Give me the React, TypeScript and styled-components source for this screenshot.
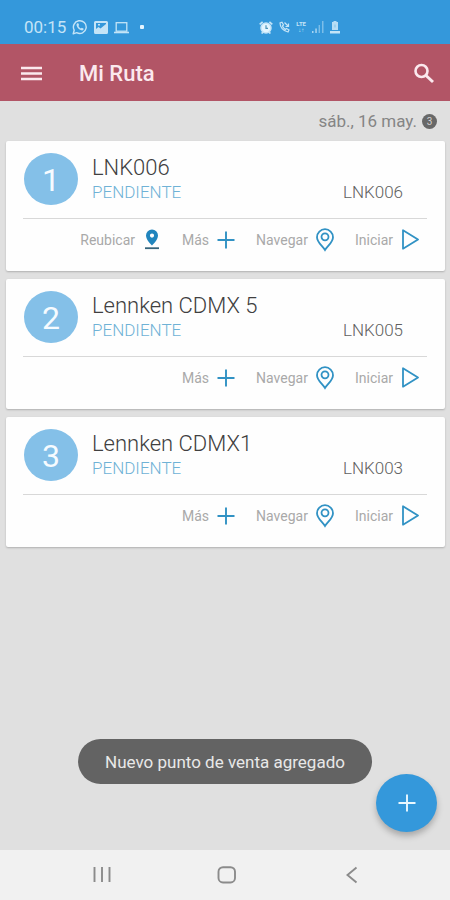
import React from "react";
import styled, { createGlobalStyle } from "styled-components";

const GlobalStyle = createGlobalStyle`
  *, *::before, *::after { box-sizing: border-box; }
  body { margin: 0; background: #e0e0e0; font-family: Roboto, "Noto Sans", sans-serif; }
  button { margin: 0; padding: 0; border: 0; background: none; font: inherit; color: inherit; cursor: pointer; }
  svg { display: block; flex: none; }
  h1, h2, p, ul { margin: 0; padding: 0; font-weight: 400; }
`;

const Screen = styled.div`
  display: flex;
  flex-direction: column;
  min-height: 100vh;
  background: #e0e0e0;
`;

const StatusBar = styled.div`
  display: flex;
  justify-content: space-between;
  align-items: center;
  height: 44px;
  padding: 10px 110px 0 24px;
  background: #3498db;
  color: #c4e4f7;
`;

const StatusGroup = styled.div`
  display: flex;
  align-items: center;
  gap: 6px;
`;

const Clock = styled.span`
  font-size: 17px;
  line-height: 20px;
`;

const NetworkLabel = styled.span`
  display: flex;
  flex-direction: column;
  align-items: center;
  font-size: 6px;
  line-height: 6px;
  font-weight: 700;
`;

const AppBar = styled.header`
  display: flex;
  align-items: center;
  height: 57px;
  padding: 2px 15px 0 19px;
  background: #b25566;
  color: #fbe9ee;
`;

const AppTitle = styled.h1`
  flex: 1;
  padding-left: 36px;
  font-size: 22px;
  line-height: 28px;
  && { font-weight: 500; }
`;

const Main = styled.main`
  position: relative;
  flex: 1;
  padding: 0 5px 24px 6px;
`;

const DateRow = styled.div`
  display: flex;
  justify-content: flex-end;
  align-items: center;
  gap: 5px;
  height: 40px;
  padding-right: 8px;
  color: #858585;
  font-size: 17px;
  line-height: 20px;
`;

const CountBadge = styled.span`
  width: 15px;
  height: 15px;
  border-radius: 50%;
  background: #686868;
  color: #d2d2d2;
  font-size: 10px;
  line-height: 15px;
  text-align: center;
`;

const StopList = styled.ul`
  display: flex;
  flex-direction: column;
  gap: 8px;
  list-style: none;
`;

const Card = styled.li`
  height: 130px;
  padding: 12px 18px 0 17px;
  border-radius: 2px;
  background: #fefefe;
  box-shadow: 0 1px 2px rgba(0, 0, 0, 0.22);
`;

const CardHead = styled.div`
  display: flex;
  height: 66px;
  border-bottom: 1px solid #d8d8d8;
`;

const StopNumber = styled.span`
  flex: none;
  width: 54px;
  height: 52px;
  margin: 0 14px 0 1px;
  border-radius: 50%;
  background: #84c0e8;
  color: #f6fbff;
  font-size: 32px;
  line-height: 54px;
  text-align: center;
`;

const StopText = styled.div`
  flex: 1;
  padding-top: 1px;
`;

const StopName = styled.h2`
  color: #404040;
  font-size: 22px;
  line-height: 28px;
  && { font-weight: 300; }
`;

const StopLine = styled.div`
  display: flex;
  justify-content: space-between;
  padding-right: 24px;
  font-size: 17px;
  line-height: 20px;
  font-weight: 300;
`;

const StopState = styled.span`
  color: #6fb2d6;
`;

const StopCode = styled.span`
  color: #606060;
`;

const Actions = styled.div`
  display: flex;
  justify-content: flex-end;
  gap: 21px;
  padding: 8px 8px 0 0;
`;

const ActionButton = styled.button`
  display: flex;
  align-items: center;
  gap: 8px;
  height: 26px;
  color: #a9a9a9;
  font-size: 14px;
  line-height: 20px;

  svg { color: #3192c4; }
`;

const Toast = styled.div`
  position: absolute;
  bottom: 66px;
  left: 50%;
  transform: translateX(-50%);
  padding: 13px 27px 12px;
  border-radius: 23px;
  background: #636363;
  color: #e8e8e8;
  font-size: 17px;
  line-height: 20px;
  white-space: nowrap;
`;

const AddButton = styled.button`
  && {
    position: absolute;
    right: 13px;
    bottom: 18px;
    display: grid;
    place-items: center;
    width: 61px;
    height: 58px;
    border-radius: 50%;
    background: #3498db;
    color: #e9f8ff;
    box-shadow: 0 4px 6px rgba(0, 0, 0, 0.25);
  }
`;

const SystemNav = styled.nav`
  display: grid;
  grid-template-columns: repeat(3, 28%);
  justify-content: center;
  align-items: center;
  height: 50px;
  padding-left: 4px;
  background: #f1f1f1;
  color: #8b8b8b;
`;

const NavButton = styled.button`
  display: grid;
  place-items: center;
  height: 50px;
`;

const WhatsAppIcon = () => (
  <svg width="16" height="16" viewBox="0 0 16 16" fill="none" stroke="currentColor" strokeWidth="1.4" aria-hidden="true">
    <path d="M1.2 14.8l1-3.6a6.4 6.4 0 1 1 2.5 2.5z" strokeLinejoin="round" />
    <path d="M5.1 4.4l1-.3 1 2-.7.9c.5 1.1 1.300 1.900 2.500 2.500l.9-.8 1.900 1-.3 1c-.5.700-1.300.900-2.200.6C6.900 10.600 5.300 9 4.700 6.800c-.3-.9-.2-1.800.4-2.400z" fill="currentColor" stroke="none" />
  </svg>
);

const PictureIcon = () => (
  <svg width="14" height="13" viewBox="0 0 14 13" aria-hidden="true">
    <path fill="currentColor" fillRule="evenodd" d="M1.500 0h11A1.500 1.500 0 0 1 14 1.500v10a1.500 1.500 0 0 1-1.500 1.500h-11A1.500 1.500 0 0 1 0 11.500v-10A1.500 1.500 0 0 1 1.500 0zM2 2v6l2.500-2 2 1.500L12 3V2zm2 1h2v1.500H4z" />
  </svg>
);

const LaptopIcon = () => (
  <svg width="15" height="13" viewBox="0 0 15 13" fill="none" stroke="currentColor" aria-hidden="true">
    <rect x="2.200" y="1.700" width="10.600" height="8.500" strokeWidth="1.300" />
    <path d="M0 11.500h15" strokeWidth="1.600" />
  </svg>
);

const DotIcon = () => (
  <svg width="14" height="4" viewBox="0 0 14 4" aria-hidden="true">
    <rect x="5" width="4" height="4" rx="1" fill="#e4f5ff" />
  </svg>
);

const AlarmIcon = () => (
  <svg width="14" height="13" viewBox="0 0 14 13" fill="none" stroke="currentColor" aria-hidden="true">
    <circle cx="7" cy="7" r="5" fill="#e4f5ff" strokeWidth="1.500" />
    <path d="M.7 3.300L3.600.8M13.300 3.300L10.400.8M2.600 12.500l1.600-1.600M11.400 12.500l-1.600-1.600" strokeWidth="1.700" />
    <path d="M7 4.200V7.300h2" stroke="#4c93b8" strokeWidth="1.200" />
  </svg>
);

const CallIcon = () => (
  <svg width="11" height="12" viewBox="0 0 11 12" fill="none" stroke="currentColor" strokeWidth="1.200" aria-hidden="true">
    <path d="M1 2c0 4 3 8 8 9l1-2-2.500-1.500-1.200 1C4.800 7.500 4 6.300 3.400 5L4.500 4 3 1.300zM5.500 1.500l4 4M9.500 2.500v3h-3" />
  </svg>
);

const SignalIcon = () => (
  <svg width="12" height="12" viewBox="0 0 12 12" fill="currentColor" aria-hidden="true">
    <path d="M0 10h1.500v2H0zM3.300 7.500h1.500V12H3.300z" opacity=".8" />
    <path d="M6.600 4h1.400v8H6.600zM10 0h1.500v12H10z" opacity=".5" />
  </svg>
);

const BatteryIcon = () => (
  <svg width="10" height="13" viewBox="0 0 10 13" fill="currentColor" aria-hidden="true">
    <path d="M3.500 0h3v1H8v8H2V1h1.500z" opacity=".9" />
    <path d="M0 10h10v2.500H0z" />
    <path d="M4.300 3.500h1.400v3H4.300z" fill="#8fcbed" />
  </svg>
);

const MenuIcon = () => (
  <svg width="24" height="20" viewBox="0 0 24 20" aria-hidden="true">
    <path d="M2 4h21M2 9.500h21M2 15h21" stroke="currentColor" strokeWidth="2.300" />
  </svg>
);

const SearchIcon = () => (
  <svg width="22" height="22" viewBox="0 0 22 22" fill="none" stroke="currentColor" aria-hidden="true">
    <circle cx="8.500" cy="8" r="6" strokeWidth="2.600" />
    <path d="M13 12.500l7 6.500" strokeWidth="3" />
  </svg>
);

const RelocateIcon = () => (
  <svg width="18" height="24" viewBox="0 0 18 24" aria-hidden="true">
    <path fill="#2185bd" fillRule="evenodd" d="M9 1.500a6 6 0 0 0-6 6C3 12 9 17.500 9 17.500s6-5.500 6-10a6 6 0 0 0-6-6zm0 4a2.100 2.100 0 1 1 0 4.200 2.100 2.100 0 0 1 0-4.200z" />
    <path d="M2 20.200h14" stroke="#35637a" strokeWidth="1.800" />
  </svg>
);

const PlusIcon = ({ size = 18 }: { size?: number }) => (
  <svg width={size} height={size} viewBox="0 0 18 18" aria-hidden="true">
    <path d="M.5 9h17M9 .5v17" stroke="currentColor" strokeWidth="1.900" />
  </svg>
);

const PinIcon = () => (
  <svg width="18" height="24" viewBox="0 0 18 24" fill="none" stroke="currentColor" aria-hidden="true">
    <path d="M9 1.200a8 8 0 0 0-8 8C1 14.200 6 17.300 9 22c3-4.700 8-7.800 8-12.800a8 8 0 0 0-8-8z" strokeWidth="1.800" />
    <circle cx="9" cy="8.800" r="3.500" strokeWidth="1.800" />
  </svg>
);

const PlayIcon = () => (
  <svg width="18" height="24" viewBox="0 0 18 24" fill="none" stroke="currentColor" aria-hidden="true">
    <path d="M2 2.300v18.400L17 11.500z" strokeWidth="1.800" strokeLinejoin="round" />
  </svg>
);

type Stop = { name: string; code: string; movable?: boolean };

const stops: Stop[] = [
  { name: "LNK006", code: "LNK006", movable: true },
  { name: "Lennken CDMX 5", code: "LNK005" },
  { name: "Lennken CDMX1", code: "LNK003" },
];

const StopCard = ({ stop, position }: { stop: Stop; position: number }) => (
  <Card>
    <CardHead>
      <StopNumber>{position}</StopNumber>
      <StopText>
        <StopName>{stop.name}</StopName>
        <StopLine>
          <StopState>PENDIENTE</StopState>
          <StopCode>{stop.code}</StopCode>
        </StopLine>
      </StopText>
    </CardHead>
    <Actions>
      {stop.movable && (
        <ActionButton type="button">Reubicar<RelocateIcon /></ActionButton>
      )}
      <ActionButton type="button">Más<PlusIcon /></ActionButton>
      <ActionButton type="button">Navegar<PinIcon /></ActionButton>
      <ActionButton type="button">Iniciar<PlayIcon /></ActionButton>
    </Actions>
  </Card>
);

export default function App() {
  return (
    <>
      <GlobalStyle />
      <Screen>
        <StatusBar>
          <StatusGroup>
            <Clock>00:15</Clock>
            <WhatsAppIcon />
            <PictureIcon />
            <LaptopIcon />
            <DotIcon />
          </StatusGroup>
          <StatusGroup>
            <AlarmIcon />
            <CallIcon />
            <NetworkLabel><span>LTE</span><span>↓↑</span></NetworkLabel>
            <SignalIcon />
            <BatteryIcon />
          </StatusGroup>
        </StatusBar>
        <AppBar>
          <button type="button" aria-label="Menú"><MenuIcon /></button>
          <AppTitle>Mi Ruta</AppTitle>
          <button type="button" aria-label="Buscar"><SearchIcon /></button>
        </AppBar>
        <Main>
          <DateRow>
            <span>sáb., 16 may.</span>
            <CountBadge>3</CountBadge>
          </DateRow>
          <StopList>
            {stops.map((stop, i) => (
              <StopCard key={stop.code} stop={stop} position={i + 1} />
            ))}
          </StopList>
          <Toast role="status">Nuevo punto de venta agregado</Toast>
          <AddButton type="button" aria-label="Agregar"><PlusIcon /></AddButton>
        </Main>
        <SystemNav>
          <NavButton type="button" aria-label="Recientes">
            <svg width="18" height="18" viewBox="0 0 18 18" aria-hidden="true">
              <path d="M1.500 1v15M9 1v15M16.500 1v15" stroke="currentColor" strokeWidth="1.900" />
            </svg>
          </NavButton>
          <NavButton type="button" aria-label="Inicio">
            <svg width="20" height="18" viewBox="0 0 20 18" fill="none" aria-hidden="true">
              <rect x="1.500" y="1.200" width="16.500" height="15.300" rx="4.500" stroke="currentColor" strokeWidth="1.900" />
            </svg>
          </NavButton>
          <NavButton type="button" aria-label="Atrás">
            <svg width="18" height="18" viewBox="0 0 18 18" fill="none" aria-hidden="true">
              <path d="M13.500 1.500l-9 7.500 9 7.500" stroke="currentColor" strokeWidth="1.900" />
            </svg>
          </NavButton>
        </SystemNav>
      </Screen>
    </>
  );
}
